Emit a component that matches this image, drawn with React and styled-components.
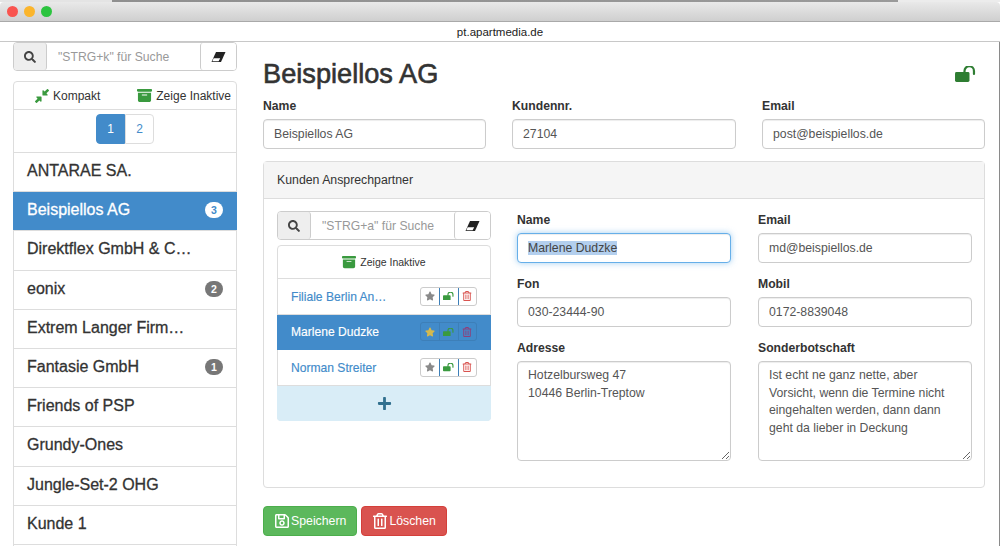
import React, { useEffect, useRef } from "react";
import styled, { createGlobalStyle } from "styled-components";
import { FaSearch, FaStar, FaPlus, FaRegSave, FaRegTrashAlt } from "react-icons/fa";
import { FaBoxArchive, FaDownLeftAndUpRightToCenter } from "react-icons/fa6";

const GlobalStyle = createGlobalStyle`
  html, body {
    margin: 0;
    padding: 0;
    background: #fff;
    overflow: hidden;
  }
  * {
    box-sizing: border-box;
  }
  body {
    font-family: "Liberation Sans", Arial, sans-serif;
    font-size: 13px;
    color: #333;
  }
`

const Page = styled.div`
  width: 1000px;
  height: 546px;
  overflow: hidden;
  display: flex;
  flex-direction: column;
`

const TopStrip = styled.div`
  height: 2px;
  flex: none;
  background: linear-gradient(to right, #e4e4e4 0, #e4e4e4 112px, #8f8f8f 112px, #9a9a9a 898px, #ececec 898px);
`

const TitleBar = styled.div`
  height: 20px;
  flex: none;
  display: flex;
  align-items: center;
  gap: 6px;
  padding-left: 7px;
  background: linear-gradient(#e9e9e9, #cfcfcf);
  border-bottom: 1px solid #a9a9a9;
  border-radius: 4px 4px 0 0;
`

const Light = styled.span`
  width: 11px;
  height: 11px;
  border-radius: 50%;
  background: ${p => p.$color};
`

const UrlBar = styled.div`
  height: 20px;
  flex: none;
  display: flex;
  align-items: center;
  justify-content: center;
  padding-top: 1px;
  font-size: 11.5px;
  color: #222;
  border-bottom: 1px solid #c8c8c8;
`

const Body = styled.div`
  flex: 1;
  min-height: 0;
  display: flex;
  gap: 26px;
  padding: 0 14px 0 13px;
  border-right: 1px solid #8a8a8a;
`

const Sidebar = styled.aside`
  width: 224px;
  flex: none;
`

const SearchGroup = styled.div`
  display: flex;
  height: 29px;
  border: 1px solid #ccc;
  border-radius: 4px;
  background: #fff;
  margin-bottom: ${p => p.$gap}px;
`

const SearchAddon = styled.div`
  width: ${p => p.$width}px;
  flex: none;
  display: flex;
  align-items: center;
  justify-content: center;
  color: #444;
  font-size: 12px;
  background: ${p => (p.$shaded ? "#eee" : "#fff")};
  border-left: ${p => (p.$shaded ? "none" : "1px solid #ccc")};
  border-right: ${p => (p.$shaded ? "1px solid #ccc" : "none")};
  border-radius: 3px;
`

const SearchInput = styled.input`
  flex: 1;
  min-width: 0;
  border: 0;
  outline: 0;
  padding: 0 11px;
  background: transparent;
  font: 12.2px "Liberation Sans", Arial, sans-serif;
  &::placeholder {
    color: #999;
    opacity: 1;
  }
`

const CompanyPanel = styled.div`
  border: 1px solid #ddd;
  border-radius: 4px;
  background: #fff;
  padding-bottom: 20px;
`

const FilterRow = styled.div`
  height: 28px;
  display: flex;
  align-items: center;
  justify-content: space-between;
  padding: 0 5px 0 21px;
  border-bottom: 1px solid #ddd;
  font-size: 12px;
`

const FilterLink = styled.span`
  display: inline-flex;
  align-items: center;
  gap: 4px;
  color: #333;
  svg {
    color: #3a9a3f;
    font-size: ${p => p.$icon}px;
  }
`

const PagerRow = styled.div`
  height: 43px;
  display: flex;
  justify-content: center;
  padding-top: 4px;
  border-bottom: 1px solid #ddd;
`

const PageButton = styled.span`
  width: 29px;
  height: 30px;
  display: flex;
  align-items: center;
  justify-content: center;
  font-size: 12px;
  color: ${p => (p.$active ? "#fff" : "#428bca")};
  background: ${p => (p.$active ? "#428bca" : "#fff")};
  border: 1px solid ${p => (p.$active ? "#428bca" : "#ddd")};
  border-radius: ${p => (p.$active ? "4px 0 0 4px" : "0 4px 4px 0")};
`

const CompanyRow = styled.div`
  height: 39.2px;
  margin: 0 ${p => (p.$active ? "-1px" : "0")};
  display: flex;
  align-items: center;
  justify-content: space-between;
  padding: 0 ${p => (p.$active ? "14px" : "13px")} 2px;
  border-bottom: 1px solid #ddd;
  font-size: 16px;
  -webkit-text-stroke: 0.3px currentColor;
  color: ${p => (p.$active ? "#fff" : "#333")};
  background: ${p => (p.$active ? "#428bca" : "#fff")};
`

const Badge = styled.span`
  width: 18px;
  height: 16px;
  border-radius: 8px;
  display: flex;
  align-items: center;
  justify-content: center;
  font-size: 10.5px;
  font-weight: bold;
  -webkit-text-stroke: 0;
  color: ${p => (p.$active ? "#428bca" : "#fff")};
  background: ${p => (p.$active ? "#fff" : "#777")};
`

const Main = styled.main`
  flex: 1;
  min-width: 0;
`

const Heading = styled.div`
  height: 57px;
  display: flex;
  align-items: center;
  justify-content: space-between;
  padding: 7px 0 0;
  h1 {
    margin: 0;
    font-size: 27.2px;
    font-weight: normal;
    -webkit-text-stroke: 0.6px currentColor;
  }
`

const HeaderLock = styled.span`
  display: flex;
  color: #2e7d32;
  margin-right: 9px;
`

const TopGrid = styled.div`
  display: grid;
  grid-template-columns: 223px 224px 223px;
  column-gap: 26px;
  margin-bottom: 12px;
`

const Label = styled.label`
  display: block;
  font-size: 12.2px;
  font-weight: bold;
  line-height: 15px;
  margin-bottom: 5px;
`

const Input = styled.input`
  display: block;
  width: 100%;
  height: 30px;
  padding: 0 10px;
  border: 1px solid #ccc;
  border-radius: 4px;
  outline: 0;
  color: #555;
  font: 12.25px "Liberation Sans", Arial, sans-serif;
  box-shadow: inset 0 1px 1px rgba(0, 0, 0, 0.075);
  &:focus {
    border-color: #66afe9;
    box-shadow: inset 0 1px 1px rgba(0, 0, 0, 0.075), 0 0 6px rgba(102, 175, 233, 0.6);
  }
  &::selection {
    background: #b3cfee;
    color: #444;
  }
`

const TextArea = styled.textarea`
  display: block;
  width: 100%;
  height: 100px;
  padding: 5px 10px;
  border: 1px solid #ccc;
  border-radius: 4px;
  outline: 0;
  color: #555;
  font: 12.25px/17.6px "Liberation Sans", Arial, sans-serif;
  box-shadow: inset 0 1px 1px rgba(0, 0, 0, 0.075);
`

const ContactPanel = styled.section`
  height: 327px;
  border: 1px solid #ddd;
  border-radius: 4px;
  margin-bottom: 18px;
`

const ContactHeader = styled.div`
  height: 37px;
  display: flex;
  align-items: center;
  padding: 0 13px;
  font-size: 12.3px;
  background: #f5f5f5;
  border-bottom: 1px solid #ddd;
`

const ContactBody = styled.div`
  display: flex;
  gap: 26px;
  padding: 12px 12px 0 13px;
`

const ContactList = styled.div`
  width: 214px;
  flex: none;
`

const ListPanel = styled.div`
  border: 1px solid #ddd;
  border-radius: 4px;
`

const ListFilter = styled.div`
  height: 33px;
  display: flex;
  align-items: center;
  justify-content: center;
  font-size: 10.5px;
  border-bottom: 1px solid #ddd;
`

const ContactRow = styled.div`
  height: 35.6px;
  margin: 0 ${p => (p.$active ? "-1px" : "0")};
  display: flex;
  align-items: center;
  justify-content: space-between;
  padding: 0 ${p => (p.$active ? "14px" : "13px")};
  font-size: 12.1px;
  -webkit-text-stroke: 0.15px currentColor;
  color: ${p => (p.$active ? "#fff" : "#428bca")};
  background: ${p => (p.$active ? "#428bca" : "#fff")};
  border-bottom: 1px solid ${p => (p.$active ? "#428bca" : "#ddd")};
`

const ContactName = styled.span`
  padding-top: ${p => (p.$active ? "0" : "1px")};
`

const ActionGroup = styled.div`
  display: flex;
  height: 19px;
  border: 1px solid ${p => (p.$active ? "#3d7fb8" : "#ccc")};
  border-radius: 3px;
  background: ${p => (p.$active ? "#428bca" : "#fff")};
`

const ActionButton = styled.span`
  width: 18.5px;
  display: flex;
  align-items: center;
  justify-content: center;
  font-size: 10px;
  color: ${p => p.$color};
  & + & {
    border-left: 1px solid ${p => (p.$active ? "#3d7fb8" : "#ccc")};
  }
`

const AddRow = styled.div`
  height: 35px;
  margin: 0 -1px -1px;
  display: flex;
  align-items: center;
  justify-content: center;
  color: #31708f;
  font-size: 15px;
  background: #d9edf7;
  border-radius: 0 0 4px 4px;
`

const FormGrid = styled.div`
  flex: 1;
  padding-top: 2px;
  display: grid;
  grid-template-columns: 214px 214px;
  column-gap: 27px;
  grid-auto-rows: min-content;
  row-gap: 14px;
`

const Footer = styled.div`
  display: flex;
  gap: 4px;
`

const Button = styled.button`
  height: 30px;
  display: inline-flex;
  align-items: center;
  gap: 1px;
  padding: 0 10px;
  border: 1px solid ${p => p.$border};
  border-radius: 4px;
  color: #fff;
  background: ${p => p.$bg};
  font: 12.3px "Liberation Sans", Arial, sans-serif;
  svg {
    font-size: 16px;
  }
`

const companies = [
  { name: "ANTARAE SA." },
  { name: "Beispiellos AG", count: 3, active: true },
  { name: "Direktflex GmbH & C…" },
  { name: "eonix", count: 2 },
  { name: "Extrem Langer Firm…" },
  { name: "Fantasie GmbH", count: 1 },
  { name: "Friends of PSP" },
  { name: "Grundy-Ones" },
  { name: "Jungle-Set-2 OHG" },
  { name: "Kunde 1" },
];

const contacts = [
  { name: "Filiale Berlin An…" },
  { name: "Marlene Dudzke", active: true },
  { name: "Norman Streiter" },
];

function EraserIcon() {
  return (
    <svg width="15" height="12" viewBox="0 0 15 12">
      <path d="M5 1h9.5L10 11H.5z" fill="#222" />
      <path d="M2.6 7.2h6.6L7.6 10.2H1.4z" fill="#fff" />
    </svg>
  );
}

function UnlockIcon({ size }) {
  return (
    <svg width={size} height={size * 0.76} viewBox="0 0 21 16" fill="none">
      <rect x="0" y="6" width="14.5" height="10" rx="1.5" fill="currentColor" />
      <path d="M9.5 7V5a4.5 4.5 0 0 1 9.5 0v3" stroke="currentColor" strokeWidth="2.2" strokeLinecap="round" />
    </svg>
  );
}

function Search({ placeholder, gap }) {
  return (
    <SearchGroup $gap={gap}>
      <SearchAddon $width={33} $shaded><FaSearch /></SearchAddon>
      <SearchInput placeholder={placeholder} />
      <SearchAddon $width={36}><EraserIcon /></SearchAddon>
    </SearchGroup>
  );
}

export default function App() {
  const nameRef = useRef(null);

  // der Name ist im Original markiert
  useEffect(() => {
    nameRef.current.focus();
    nameRef.current.select();
  }, []);

  return (
    <Page>
      <GlobalStyle />
      <TopStrip />
      <TitleBar>
        <Light $color="#f9544f" />
        <Light $color="#fbb52c" />
        <Light $color="#2cc43f" />
      </TitleBar>
      <UrlBar>pt.apartmedia.de</UrlBar>
      <Body>
        <Sidebar>
          <Search placeholder={'"STRG+k" für Suche'} gap={10} />
          <CompanyPanel>
            <FilterRow>
              <FilterLink $icon={14}><FaDownLeftAndUpRightToCenter />Kompakt</FilterLink>
              <FilterLink $icon={15}><FaBoxArchive />Zeige Inaktive</FilterLink>
            </FilterRow>
            <PagerRow>
              <PageButton $active>1</PageButton>
              <PageButton>2</PageButton>
            </PagerRow>
            {companies.map(c => (
              <CompanyRow key={c.name} $active={c.active}>
                <span>{c.name}</span>
                {c.count && <Badge $active={c.active}>{c.count}</Badge>}
              </CompanyRow>
            ))}
          </CompanyPanel>
        </Sidebar>
        <Main>
          <Heading>
            <h1>Beispiellos AG</h1>
            <HeaderLock><UnlockIcon size={21} /></HeaderLock>
          </Heading>
          <TopGrid>
            <div>
              <Label>Name</Label>
              <Input defaultValue="Beispiellos AG" />
            </div>
            <div>
              <Label>Kundennr.</Label>
              <Input defaultValue="27104" />
            </div>
            <div>
              <Label>Email</Label>
              <Input defaultValue="post@beispiellos.de" />
            </div>
          </TopGrid>
          <ContactPanel>
            <ContactHeader>Kunden Ansprechpartner</ContactHeader>
            <ContactBody>
              <ContactList>
                <Search placeholder={'"STRG+a" für Suche'} gap={5} />
                <ListPanel>
                  <ListFilter>
                    <FilterLink $icon={14}><FaBoxArchive />Zeige Inaktive</FilterLink>
                  </ListFilter>
                  {contacts.map(c => (
                    <ContactRow key={c.name} $active={c.active}>
                      <ContactName $active={c.active}>{c.name}</ContactName>
                      <ActionGroup $active={c.active}>
                        <ActionButton $color={c.active ? "#d4b94e" : "#8a8a8a"}><FaStar /></ActionButton>
                        <ActionButton $active={c.active} $color="#3a9a3f"><UnlockIcon size={11} /></ActionButton>
                        <ActionButton $active={c.active} $color={c.active ? "#8f3f7a" : "#d9534f"}><FaRegTrashAlt /></ActionButton>
                      </ActionGroup>
                    </ContactRow>
                  ))}
                  <AddRow><FaPlus /></AddRow>
                </ListPanel>
              </ContactList>
              <FormGrid>
                <div>
                  <Label>Name</Label>
                  <Input ref={nameRef} defaultValue="Marlene Dudzke" />
                </div>
                <div>
                  <Label>Email</Label>
                  <Input defaultValue="md@beispiellos.de" />
                </div>
                <div>
                  <Label>Fon</Label>
                  <Input defaultValue="030-23444-90" />
                </div>
                <div>
                  <Label>Mobil</Label>
                  <Input defaultValue="0172-8839048" />
                </div>
                <div>
                  <Label>Adresse</Label>
                  <TextArea defaultValue={"Hotzelbursweg 47\n10446 Berlin-Treptow"} />
                </div>
                <div>
                  <Label>Sonderbotschaft</Label>
                  <TextArea defaultValue={"Ist echt ne ganz nette, aber Vorsicht, wenn die Termine nicht eingehalten werden, dann dann geht da lieber in Deckung"} />
                </div>
              </FormGrid>
            </ContactBody>
          </ContactPanel>
          <Footer>
            <Button $bg="#5cb85c" $border="#4cae4c"><FaRegSave />Speichern</Button>
            <Button $bg="#d9534f" $border="#d43f3a"><FaRegTrashAlt />Löschen</Button>
          </Footer>
        </Main>
      </Body>
    </Page>
  );
}
